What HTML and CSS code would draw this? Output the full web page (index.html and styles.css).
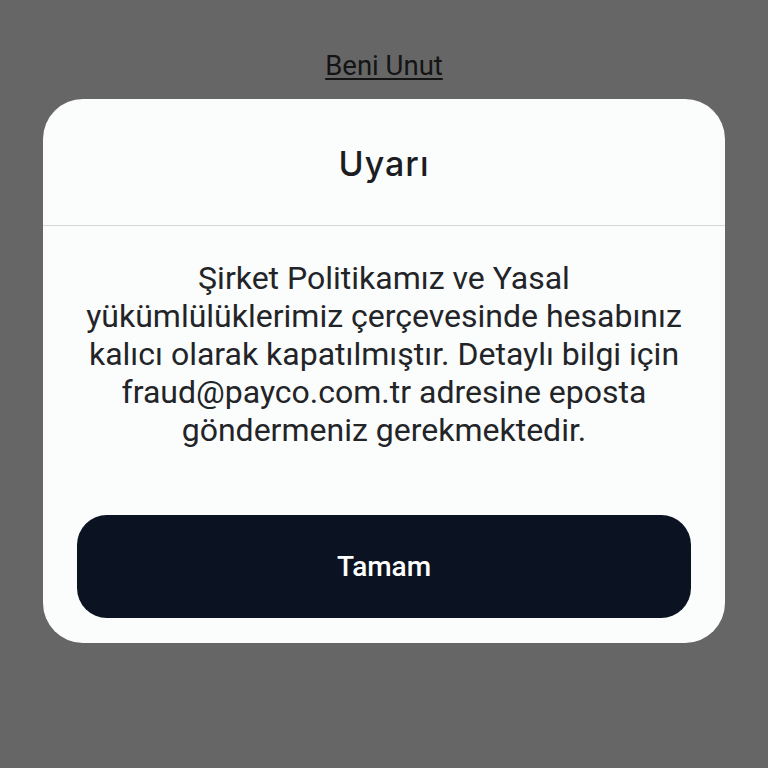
FILE: index.html
```html
<!DOCTYPE html>
<html lang="tr">
<head>
<meta charset="utf-8">
<link rel="stylesheet" href="styles.css">
</head>
<body>
<div class="screen">
  <div class="top">
    <a class="forget" href="#">Beni Unut</a>
  </div>
  <div class="card">
    <div class="card-header">
      <h1 class="title">Uyarı</h1>
    </div>
    <div class="card-body">
      <p class="message">Şirket Politikamız ve Yasal<br>yükümlülüklerimiz çerçevesinde hesabınız<br>kalıcı olarak kapatılmıştır. Detaylı bilgi için<br>fraud@payco.com.tr adresine eposta<br>göndermeniz gerekmektedir.</p>
      <button class="ok-button">Tamam</button>
    </div>
  </div>
</div>
</body>
</html>
```
FILE: styles.css
```css
html, body {
  margin: 0;
  padding: 0;
  background: #666666;
  font-family: Roboto, "Liberation Sans", sans-serif;
}
.screen {
  width: 768px;
  height: 768px;
  display: flex;
  flex-direction: column;
}
.top {
  height: 99px;
  display: flex;
  justify-content: center;
  align-items: flex-start;
}
.forget {
  margin-top: 49px;
  font-size: 27.5px;
  line-height: 34px;
  color: #141414;
  text-decoration: underline;
  text-decoration-thickness: 2px;
  text-underline-offset: 3px;
}
.card {
  margin: 0 43px;
  background: #fbfcfc;
  border-radius: 40px;
  display: flex;
  flex-direction: column;
}
.card-header {
  height: 126px;
  border-bottom: 1px solid #d4d6d8;
  display: flex;
  align-items: center;
  justify-content: center;
}
.title {
  margin: 3px 0 0;
  font-family: Inter, Lato, sans-serif;
  font-weight: 500;
  font-size: 34px;
  letter-spacing: 1px;
  color: #1b1d22;
}
.card-body {
  padding: 33px 34px 25px;
  display: flex;
  flex-direction: column;
}
.message {
  margin: 0;
  text-align: center;
  font-size: 32px;
  line-height: 38px;
  color: #222428;
}
.ok-button {
  margin-top: 66px;
  height: 103px;
  border: none;
  border-radius: 30px;
  background: #0b1221;
  color: #ffffff;
  font-family: Roboto, "Liberation Sans", sans-serif;
  font-weight: 500;
  font-size: 28px;
}
```
